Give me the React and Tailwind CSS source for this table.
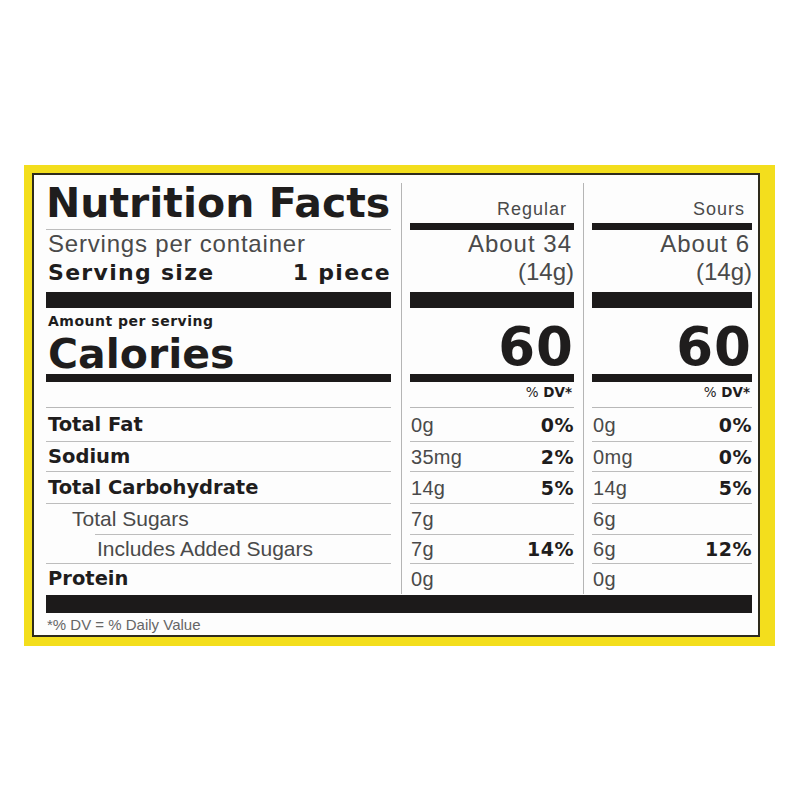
import React from "react";

const heavy = "font-['DejaVu_Sans',sans-serif] font-bold text-[#1f1d1d]";
const plain = "font-['Liberation_Sans',Arial,sans-serif] text-[#4a4a4a]";

const rows = [
  { label: "Total Fat", bold: true, h: "h-[34px]", reg: ["0g", "0%"], sour: ["0g", "0%"] },
  { label: "Sodium", bold: true, h: "h-[30px]", reg: ["35mg", "2%"], sour: ["0mg", "0%"] },
  { label: "Total Carbohydrate", bold: true, h: "h-[32px]", reg: ["14g", "5%"], sour: ["14g", "5%"] },
  { label: "Total Sugars", indent: "pl-[26px]", h: "h-[31px]", reg: ["7g", ""], sour: ["6g", ""], shortLine: true },
  { label: "Includes Added Sugars", indent: "pl-[51px]", h: "h-[29px]", reg: ["7g", "14%"], sour: ["6g", "12%"] },
  { label: "Protein", bold: true, h: "h-[30px]", reg: ["0g", ""], sour: ["0g", ""], last: true },
];

const Bar = ({ h }) => <div className={`${h} shrink-0 bg-[#1c1a1a]`} />;

const ValueColumn = ({ title, servings, which, width, padRight }) => (
  <div className={`flex border-l border-[#b5b5b5] pl-[8px] ${padRight} mt-[8px]`}>
    <div className={`${width} flex flex-col`}>
      {/* header */}
      <div className={`h-[40px] flex items-end justify-end pr-[7px] pb-[4px] ${plain} text-[18px] leading-[20px] tracking-[1px]`}>
        {title}
      </div>
      <Bar h="h-[7px]" />
      <div className={`${plain} text-[24px] leading-[28px] tracking-[1px] text-right pr-[2px]`}>{servings}</div>
      <div className={`${plain} text-[24px] leading-[28px] text-right`}>(14g)</div>
      <div className="h-[6px]" />
      <Bar h="h-[16px]" />
      <div className={`h-[66px] pt-[12px] text-right ${heavy} text-[53px] leading-[53px] tracking-[1px]`}>60</div>
      <Bar h="h-[8px]" />
      <div className={`h-[26px] border-b border-[#b8b8b8] pt-[2px] pr-[2px] text-right ${heavy} text-[13.5px] leading-[16px]`}>
        <span className="font-normal">%</span> DV*
      </div>
      {rows.map((r) => (
        <div key={r.label} className={`${r.h} flex items-center justify-between ${r.last ? "" : "border-b border-[#bdbdbd]"}`}>
          <span className={`${plain} text-[20px] leading-[24px] pl-[1px] tracking-[0.3px]`}>{r[which][0]}</span>
          <span className={`${heavy} text-[19px] leading-[24px] tracking-[0.5px]`}>{r[which][1]}</span>
        </div>
      ))}
    </div>
  </div>
);

export default function App() {
  return (
    <div className="w-[800px] h-[800px] bg-white pt-[165px] pl-[24px]">
      <div className="w-[751px] bg-[#f3de1d] pt-[8px] pl-[8px] pr-[15px] pb-[9px]">
        <div className="border-2 border-[#2e2b1c] bg-[#fdfdfd] pl-[12px] pr-[6px] pb-[2px]">
          <div className="flex">
            {/* labels */}
            <div className="w-[345px] flex flex-col">
              <div className={`h-[55px] border-b border-[#bdbdbd] pt-[8px] ${heavy} text-[41px] leading-[41px]`}>
                Nutrition Facts
              </div>
              <div className="h-[62px] pt-[1px]">
                <div className={`${plain} text-[24px] leading-[26px] tracking-[0.8px] pl-[2px]`}>Servings per container</div>
                <div className={`mt-[3px] flex justify-between ${heavy} text-[22px] leading-[26px] tracking-[1.3px] pl-[2px]`}>
                  <span>Serving size</span>
                  <span>1 piece</span>
                </div>
              </div>
              <Bar h="h-[16px]" />
              <div className="h-[66px] pt-[5px] pl-[2px]">
                <div className={`${heavy} text-[14px] leading-[16px] tracking-[0.5px]`}>Amount per serving</div>
                <div className={`mt-[7px] ${heavy} text-[41px] leading-[36px]`}>Calories</div>
              </div>
              <Bar h="h-[8px]" />
              <div className="h-[26px] border-b border-[#b8b8b8]" />
              {rows.map((r) => (
                <div key={r.label} className={`${r.h} flex flex-col`}>
                  <div
                    className={`flex-1 flex items-center ${r.indent || "pl-[2px]"} ${
                      r.bold ? `${heavy} text-[19.5px] leading-[24px]` : `${plain} text-[21px] leading-[24px]`
                    }`}
                  >
                    {r.label}
                  </div>
                  {!r.last && <div className={`h-px shrink-0 bg-[#bdbdbd] ${r.shortLine ? "ml-[49px]" : ""}`} />}
                </div>
              ))}
            </div>
            <div className="w-[10px]" />
            <ValueColumn title="Regular" servings="About 34" which="reg" width="w-[164px]" padRight="pr-[9px]" />
            <ValueColumn title="Sours" servings="About 6" which="sour" width="w-[160px]" padRight="" />
          </div>
          <div className="mt-[1px] h-[18px] bg-[#1c1a1a]" />
          <div className={`pt-[4px] ${plain} text-[#666] text-[15px] leading-[16px] pl-[1px]`}>*% DV = % Daily Value</div>
        </div>
      </div>
    </div>
  );
}
